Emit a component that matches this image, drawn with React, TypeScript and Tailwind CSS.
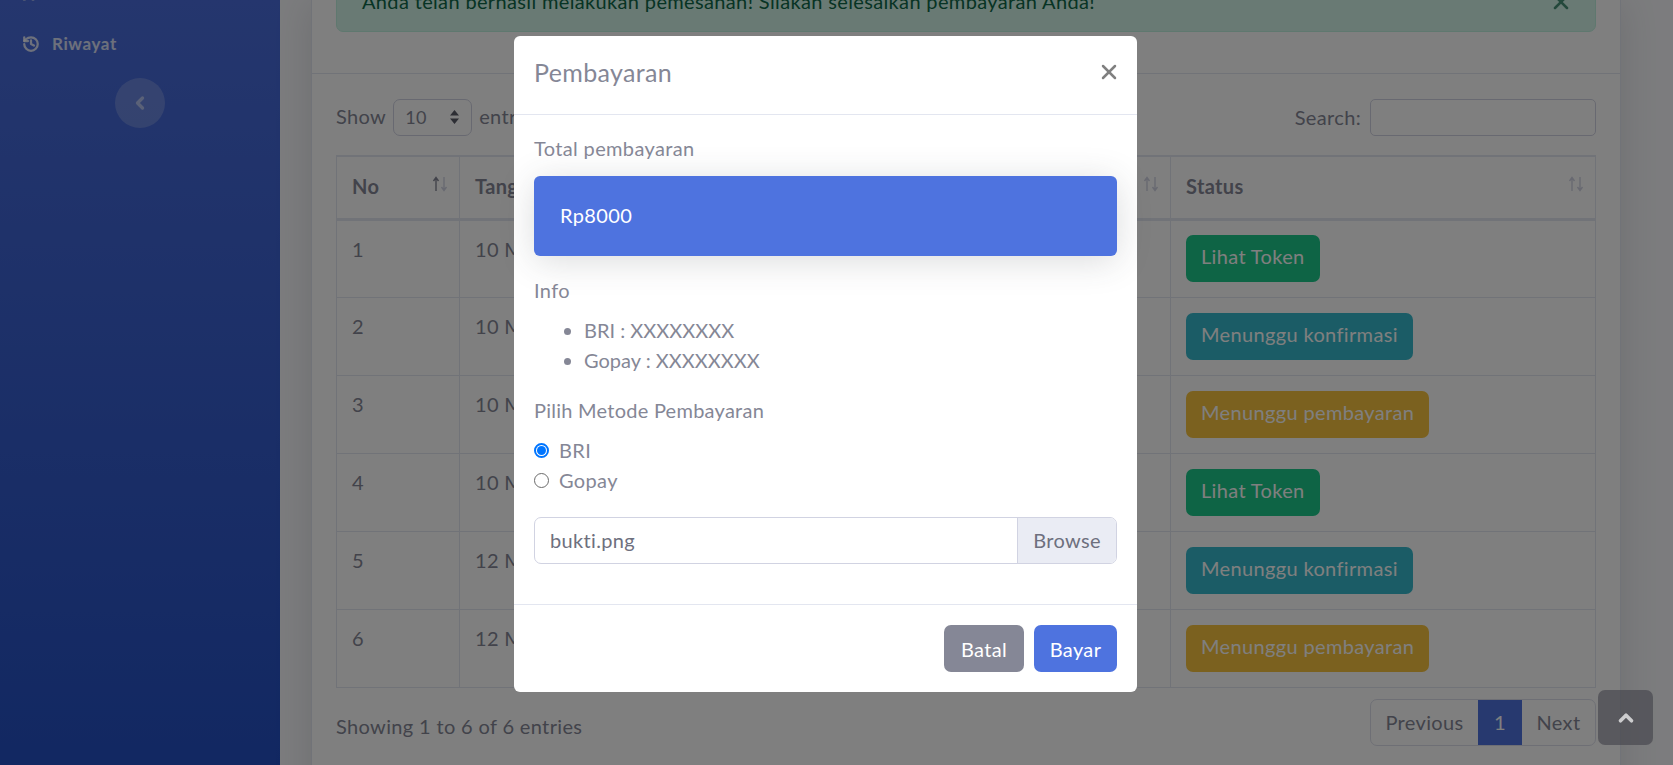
import { ChevronLeft, ChevronUp, History, ShoppingCart, X } from 'lucide-react';

const rows = [
  { no: 1, date: '10 Maret 2021', status: 'Lihat Token', color: 'bg-[#1cc88a]' },
  { no: 2, date: '10 Maret 2021', status: 'Menunggu konfirmasi', color: 'bg-[#36b9cc]' },
  { no: 3, date: '10 Maret 2021', status: 'Menunggu pembayaran', color: 'bg-[#f6c23e]' },
  { no: 4, date: '10 Maret 2021', status: 'Lihat Token', color: 'bg-[#1cc88a]' },
  { no: 5, date: '12 Maret 2021', status: 'Menunggu konfirmasi', color: 'bg-[#36b9cc]' },
  { no: 6, date: '12 Maret 2021', status: 'Menunggu pembayaran', color: 'bg-[#f6c23e]' },
];

const SortArrows = ({ active = false }: { active?: boolean }) => (
  <svg className="absolute right-[10px] top-[18px] h-[18px] w-[18px]" viewBox="0 0 18 18" fill="none" strokeWidth="1.4">
    <path d="M5 16V3M2.5 6L5 2.5 7.5 6" stroke={active ? '#858796' : '#d1d3e2'} />
    <path d="M13 2v13M10.5 12l2.5 3.5 2.5-3.5" stroke="#d1d3e2" />
  </svg>
);

const Sidebar = () => (
  <aside className="flex w-[280px] shrink-0 flex-col items-center bg-gradient-to-b from-[#4a6ddc] to-[#2450c4]">
    <ShoppingCart className="-mt-[18px] mr-[226px] h-[19px] w-[19px] text-white/80" strokeWidth={3} />
    <a className="mt-[28px] flex h-[30px] w-full items-center gap-[12px] pl-[22px] text-[17px] font-bold tracking-[0.6px] text-white/80">
      <History className="h-[18px] w-[18px]" strokeWidth={3} />
      <span>Riwayat</span>
    </a>
    <button className="mt-[19px] flex h-[50px] w-[50px] items-center justify-center rounded-full bg-white/20 text-white/50">
      <ChevronLeft className="h-[20px] w-[20px]" strokeWidth={4} />
    </button>
  </aside>
);

const DataCard = () => (
  <section className="ml-[31px] mr-[52px] h-[820px] flex-1 border-x border-[#e3e6f0] bg-white shadow-[0_3px_35px_rgba(58,59,69,0.15)]">
    <div className="flex h-[74px] flex-col border-b border-[#e3e6f0] px-[24px]">
      <div className="-mt-[28px] flex h-[60px] shrink-0 items-center justify-between rounded-[7px] border border-[#bff0de] bg-[#d2f4e8] pl-[25px] pr-[22px] text-[#0f6848]">
        <span className="pb-[2px]">Anda telah berhasil melakukan pemesanan! Silakan selesaikan pembayaran Anda!</span>
        <X className="h-[24px] w-[24px] opacity-70" strokeWidth={2.5} />
      </div>
    </div>
    <div className="px-[24px] pt-[24px]">
      <div className="flex h-[38px] items-center justify-between">
        <div className="flex items-center gap-[7px]">
          <span className="mb-[3px]">Show</span>
          <div className="flex h-[37px] w-[79px] items-center justify-between rounded-[7px] border border-[#d1d3e2] pl-[11px] pr-[11px] text-[18px]">
            <span>10</span>
            <svg className="h-[16px] w-[11px]" viewBox="0 0 11 16" fill="#5a5c69">
              <path d="M5.5 1L10 6.5H1zM5.5 15L1 9.5h9z" />
            </svg>
          </div>
          <span className="mb-[3px]">entries</span>
        </div>
        <div className="flex items-center gap-[9px]">
          <span>Search:</span>
          <div className="h-[37px] w-[226px] rounded-[5px] border border-[#d1d3e2]" />
        </div>
      </div>
      <table className="mt-[19px] w-[1260px] table-fixed border-collapse">
        <thead>
          <tr className="h-[63px] border-b-[3px] border-t-[2px] border-[#e3e6f0] text-left font-bold">
            <th className="relative w-[123px] border-x border-[#e3e6f0] pb-[3px] pl-[15px]">No<SortArrows active /></th>
            <th className="relative w-[711px] border-x border-[#e3e6f0] pb-[3px] pl-[15px]">Tanggal<SortArrows /></th>
            <th className="relative border-x border-[#e3e6f0] pb-[3px] pl-[15px]">Status<SortArrows /></th>
          </tr>
        </thead>
        <tbody>
          {rows.map((row) => (
            <tr key={row.no} className="h-[78px] border-b border-[#e3e6f0]">
              <td className="border-x border-[#e3e6f0] pl-[15px] pt-[13px] align-top">{row.no}</td>
              <td className="border-x border-[#e3e6f0] pl-[15px] pt-[13px] align-top">{row.date}</td>
              <td className="border-x border-[#e3e6f0] pl-[15px] align-middle">
                <span className={`inline-block h-[47px] rounded-[7px] px-[15px] leading-[43px] text-white ${row.color}`}>{row.status}</span>
              </td>
            </tr>
          ))}
        </tbody>
      </table>
      <div className="mt-[11px] flex items-center justify-between">
        <span className="mt-[7px]">Showing 1 to 6 of 6 entries</span>
        <div className="flex h-[47px] w-[226px] overflow-hidden rounded-[7px] border border-[#dddfeb]">
          <span className="flex w-[107px] items-center justify-center">Previous</span>
          <span className="flex w-[44px] items-center justify-center bg-[#4e73df] text-white">1</span>
          <span className="flex flex-1 items-center justify-center">Next</span>
        </div>
      </div>
    </div>
  </section>
);

const PaymentModal = () => (
  <div className="absolute left-[514px] top-[36px] w-[623px] rounded-[6px] bg-white text-[#858796]">
    <div className="flex h-[79px] items-center justify-between border-b border-[#e3e6f0] pb-[6px] pl-[20px] pr-[16px]">
      <h5 className="text-[25px] leading-[37px]">Pembayaran</h5>
      <X className="h-[24px] w-[24px] text-[#808080]" strokeWidth={2.5} />
    </div>
    <div className="px-[20px] pb-[40px] pt-[18px]">
      <p>Total pembayaran</p>
      <div className="mt-[13px] flex h-[80px] items-center rounded-[6px] bg-[#4e73df] pb-[3px] pl-[26px] text-white shadow-[0_5px_35px_rgba(58,59,69,0.18)]">Rp8000</div>
      <p className="mt-[19px]">Info</p>
      <ul className="mt-[10px] list-disc pl-[50px] tracking-normal">
        <li>BRI : XXXXXXXX</li>
        <li>Gopay : XXXXXXXX</li>
      </ul>
      <p className="mt-[20px] tracking-[0.25px]">Pilih Metode Pembayaran</p>
      <label className="mt-[10px] flex h-[30px] items-center gap-[10px]">
        <span className="flex h-[15px] w-[15px] items-center justify-center rounded-full border-2 border-[#0075ff]">
          <span className="h-[9px] w-[9px] rounded-full bg-[#0075ff]" />
        </span>
        BRI
      </label>
      <label className="flex h-[30px] items-center gap-[10px]">
        <span className="h-[15px] w-[15px] rounded-full border border-[#6b6b6b]" />
        Gopay
      </label>
      <div className="mt-[22px] flex h-[47px] overflow-hidden rounded-[7px] border border-[#d1d3e2]">
        <span className="flex flex-1 items-center pb-[2px] pl-[15px] text-[#6e707e]">bukti.png</span>
        <span className="flex items-center border-l border-[#d1d3e2] bg-[#eaecf4] px-[15px] pb-[2px] text-[#6e707e]">Browse</span>
      </div>
    </div>
    <div className="flex justify-end gap-[10px] border-t border-[#e3e6f0] p-[20px] text-white">
      <button className="h-[47px] w-[80px] rounded-[7px] bg-[#858796]">Batal</button>
      <button className="h-[47px] w-[83px] rounded-[7px] bg-[#4e73df]">Bayar</button>
    </div>
  </div>
);

export default function App() {
  return (
    <div className="relative flex h-[765px] overflow-hidden bg-[#f8f9fc] font-['Lato','Noto_Sans',sans-serif] text-[20px] leading-[30px] tracking-[0.35px] text-[#858796]">
      <Sidebar />
      <DataCard />

      {/* backdrop */}
      <div className="absolute inset-0 bg-black/50" />
      <PaymentModal />

      {/* scroll to top */}
      <a className="absolute bottom-[20px] right-[20px] flex h-[55px] w-[55px] items-center justify-center rounded-[7px] bg-[rgba(72,72,80,0.7)] text-white/70">
        <ChevronUp className="h-[22px] w-[22px]" strokeWidth={4} />
      </a>
    </div>
  );
}
